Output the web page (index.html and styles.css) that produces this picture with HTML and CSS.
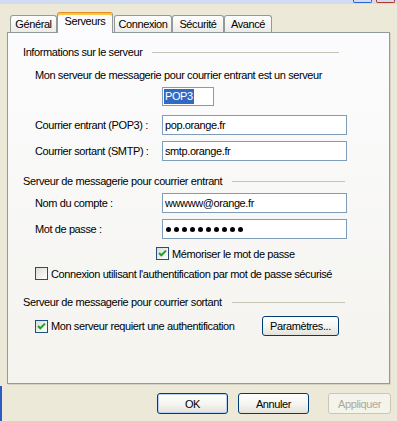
FILE: index.html
```html
<!DOCTYPE html>
<html lang="fr">

<head>
    <meta charset="UTF-8">
    <meta name="viewport" content="width=device-width, initial-scale=1.0">
    <link rel="stylesheet" href="styles.css">
    <title>Propriétés du compte</title>
</head>

<body>
    <div class="window">
        <!-- bas de la barre de titre -->
        <div class="frameTop">
            <span class="capMin"></span>
            <span class="capClose"></span>
        </div>

        <div class="tabs">
            <div class="tab general">Général</div>
            <div class="tab active">Serveurs</div>
            <div class="tab connexion">Connexion</div>
            <div class="tab securite">Sécurité</div>
            <div class="tab avance">Avancé</div>
        </div>

        <div class="panel">
            <div class="group first">Informations sur le serveur</div>
            <div class="note">Mon serveur de messagerie pour courrier entrant est un serveur</div>
            <div class="popRow">
                <span class="popBox"><span class="sel">POP3</span></span>
            </div>

            <div class="field entrant">
                <label>Courrier entrant (POP3) :</label>
                <div class="input">pop.orange.fr</div>
            </div>
            <div class="field sortant">
                <label>Courrier sortant (SMTP) :</label>
                <div class="input">smtp.orange.fr</div>
            </div>

            <div class="group second">Serveur de messagerie pour courrier entrant</div>
            <div class="field compte">
                <label>Nom du compte :</label>
                <div class="input">wwwww@orange.fr</div>
            </div>
            <div class="field passe">
                <label>Mot de passe :</label>
                <div class="input">
                    <span class="dot"></span><span class="dot"></span><span class="dot"></span><span
                        class="dot"></span><span class="dot"></span><span class="dot"></span><span
                        class="dot"></span><span class="dot"></span><span class="dot"></span><span
                        class="dot"></span>
                </div>
            </div>
            <div class="check memo">
                <span class="box checked"><svg width="11" height="11" viewBox="0 0 11 11">
                        <path d="M2 5 L4.3 7.3 L9 2.6" fill="none" stroke="#21A121" stroke-width="2" />
                    </svg></span>
                <span>Mémoriser le mot de passe</span>
            </div>
            <div class="check spa">
                <span class="box"></span>
                <span>Connexion utilisant l'authentification par mot de passe sécurisé</span>
            </div>

            <div class="group third">Serveur de messagerie pour courrier sortant</div>
            <div class="lastRow">
                <div class="check">
                    <span class="box checked"><svg width="11" height="11" viewBox="0 0 11 11">
                            <path d="M2 5 L4.3 7.3 L9 2.6" fill="none" stroke="#21A121" stroke-width="2" />
                        </svg></span>
                    <span>Mon serveur requiert une authentification</span>
                </div>
                <button type="button" class="btn params">Paramètres...</button>
            </div>
        </div>

        <div class="actions">
            <button type="button" class="btn ok">OK</button>
            <button type="button" class="btn cancel">Annuler</button>
            <button type="button" class="btn apply" disabled>Appliquer</button>
        </div>
    </div>
</body>

</html>
```

FILE: styles.css
```css
* {
    box-sizing: border-box;
}

body {
    margin: 0;
    width: 397px;
    height: 421px;
    overflow: hidden;
    background-color: #ECE9D8;
    font-family: "Liberation Sans", Arial, sans-serif;
    font-size: 11px;
    letter-spacing: -0.4px;
    color: #000;
}

.window {
    position: relative;
    height: 421px;
}

/* bord bleu à gauche, en bas */
.window::before {
    content: "";
    position: absolute;
    left: 0;
    top: 386px;
    bottom: 0;
    width: 2px;
    background: #2C5BC6;
}

.frameTop {
    position: relative;
    height: 4px;
    background: #D2DCF0;
}

.capMin,
.capClose {
    position: absolute;
    top: 0;
    height: 3px;
    border: 1px solid #2F5FD0;
    border-top: none;
    border-radius: 0 0 2px 2px;
}

.capMin {
    left: 353px;
    width: 19px;
}

.capClose {
    left: 376px;
    width: 19px;
    border-color: #B0382A;
}

.tabs {
    display: flex;
    align-items: flex-end;
    height: 28px;
    padding-left: 10px;
}

.tab {
    height: 17px;
    border: 1px solid #919B9C;
    border-bottom: none;
    border-radius: 3px 3px 0 0;
    background: linear-gradient(#FFFFFF, #ECEBE6);
    line-height: 16px;
    text-align: center;
}

.general {
    width: 47px;
}

.connexion {
    width: 58px;
}

.securite {
    width: 52px;
}

.avance {
    width: 48px;
}

.tab.active {
    position: relative;
    z-index: 1;
    width: 56px;
    height: 21px;
    margin: 0 1px -1px 0;
    border-top-color: #E68B2C;
    box-shadow: inset 0 2px 0 #FFC83C;
    background: #FCFCFE;
    line-height: 17px;
}

.panel {
    margin-left: 7px;
    width: 383px;
    height: 352px;
    padding: 12px 42px 0 15px;
    border: 1px solid #919B9C;
    background: linear-gradient(#FCFCFE, #F4F3EE);
    box-shadow: 1px 1px 0 #D6D3C4;
}

.group {
    display: flex;
    align-items: center;
    height: 14px;
    white-space: nowrap;
}

.group::after {
    content: "";
    flex: 1;
    margin: 1px 2px 0 10px;
    border-top: 1px solid #C4C3B6;
}

.group.first::after {
    margin-right: 8px;
}

.group.second {
    margin-top: 13px;
}

.group.third {
    margin-top: 15px;
}

.note {
    margin-top: 9px;
    padding-left: 12px;
    height: 14px;
    line-height: 14px;
    white-space: nowrap;
}

.popRow {
    margin-top: 5px;
    padding-left: 139px;
    height: 19px;
}

.popBox {
    display: inline-block;
    width: 52px;
    height: 19px;
    padding: 1px;
    border: 1px solid #7F9DB9;
    background: #fff;
}

.sel {
    display: inline-block;
    padding: 0 1px;
    line-height: 15px;
    background: #316AC5;
    color: #fff;
}

.field {
    display: flex;
    align-items: center;
    height: 20px;
    padding-left: 12px;
}

.field label {
    width: 127px;
    white-space: nowrap;
}

.field .input {
    flex: 1;
    height: 20px;
    padding: 0 2px;
    border: 1px solid #7F9DB9;
    background: #fff;
    line-height: 18px;
}

.field.entrant {
    margin-top: 9px;
}

.field.sortant {
    margin-top: 6px;
}

.field.compte {
    margin-top: 5px;
}

.field.passe {
    margin-top: 6px;
}

.dot {
    display: inline-block;
    width: 5px;
    height: 5px;
    margin: 0 2px 1px 1px;
    border-radius: 50%;
    background: #000;
    vertical-align: middle;
}

.check {
    display: flex;
    align-items: center;
    height: 13px;
    padding-left: 12px;
    white-space: nowrap;
}

.check.memo {
    margin-top: 8px;
    padding-left: 133px;
}

.check.spa {
    margin-top: 7px;
}

.box {
    flex-shrink: 0;
    width: 13px;
    height: 13px;
    margin-right: 3px;
    border: 1px solid #1C5180;
    background: linear-gradient(135deg, #DCDCD7, #FFFFFF);
}

.box svg {
    display: block;
}

.lastRow {
    display: flex;
    align-items: center;
    height: 20px;
    margin-top: 7px;
}

.btn {
    height: 21px;
    padding: 0;
    border: 1px solid #003C74;
    border-radius: 3px;
    background: linear-gradient(#FFFFFF, #F4F4F0 55%, #E3E2DA);
    font-family: inherit;
    font-size: 11px;
    letter-spacing: -0.4px;
    color: #000;
}

.params {
    width: 77px;
    height: 20px;
    margin: 0 8px 0 auto;
}

.actions {
    display: flex;
    justify-content: flex-end;
    margin-top: 9px;
    padding-right: 6px;
}

.ok {
    width: 71px;
    margin-right: 10px;
    box-shadow: inset 0 0 0 1px #B8D2F4;
}

.cancel {
    width: 71px;
    margin-right: 19px;
}

.apply {
    width: 63px;
    border-color: #C9C7BA;
    background: #F5F4EA;
    color: #ACA899;
}
```
